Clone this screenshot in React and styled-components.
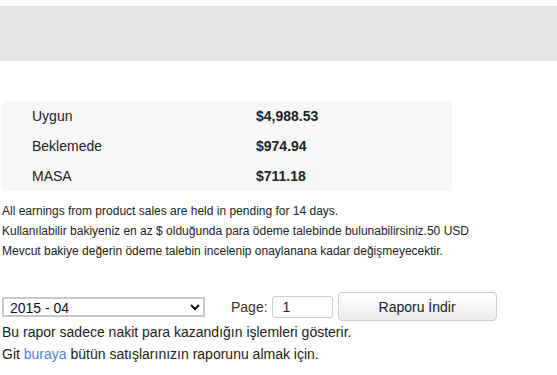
import React, { useState } from 'react'
import styled, { createGlobalStyle } from 'styled-components'

const GlobalStyle = createGlobalStyle`
  body {
    margin: 0;
    background: #fff;
    font-family: 'Liberation Sans', Arial, sans-serif;
    color: #222;
  }
`

const Banner = styled.div`
  margin-top: 6px;
  height: 55px;
  background: #e5e5e5;
`

const Balances = styled.div`
  margin: 40px 0 0 2px;
  width: 450px;
  background: #f7f7f7;
`

const BalanceRow = styled.div`
  display: grid;
  grid-template-columns: 224px 1fr;
  height: 30px;
  align-items: center;
  font-size: 14px;
  padding-left: 30px;
`

const Amount = styled.span`
  font-weight: bold;
`

const Notes = styled.div`
  margin-top: 10px;
  padding-left: 2px;
  font-size: 12px;
  line-height: 20px;
`

const Controls = styled.div`
  display: flex;
  align-items: center;
  margin: 31px 0 0 2px;
  height: 29px;
`

const MonthSelect = styled.select`
  width: 203px;
  height: 20px;
  font-family: inherit;
  font-size: 14px;
  color: #111;
  border: 2px solid #c8c8c8;
  background: #fff;
  padding: 0 2px;
`

const PageLabel = styled.label`
  margin-left: 26px;
  font-size: 14px;
  color: #333;
`

const PageInput = styled.input`
  margin-left: 4px;
  width: 61px;
  height: 22px;
  box-sizing: border-box;
  border: 1px solid #ccc;
  border-radius: 3px;
  padding: 0 10px;
  font-family: inherit;
  font-size: 14px;
  color: #222;
`

const ReportButton = styled.button`
  margin-left: 5px;
  width: 159px;
  height: 29px;
  border: 1px solid #ccc;
  border-radius: 4px;
  background: linear-gradient(#fff, #ececec);
  font-family: inherit;
  font-size: 14px;
  color: #222;
`

const Info = styled.div`
  font-size: 14px;
  line-height: 22px;
  padding-left: 2px;
  color: #222;
`

const Link = styled.a`
  color: #4f86cf;
  text-decoration: none;
`

const balances = [
  ['Uygun', '$4,988.53'],
  ['Beklemede', '$974.94'],
  ['MASA', '$711.18'],
]

export default function App() {
  const [month, setMonth] = useState('2015-04')
  const [page, setPage] = useState('1')
  return (
    <>
      <GlobalStyle />
      <Banner />
      <Balances>
        {balances.map(([label, value]) => (
          <BalanceRow key={label}>
            <span>{label}</span>
            <Amount>{value}</Amount>
          </BalanceRow>
        ))}
      </Balances>
      <Notes>
        All earnings from product sales are held in pending for 14 days.
        <br />
        Kullanılabilir bakiyeniz en az $ olduğunda para ödeme talebinde bulunabilirsiniz.50 USD
        <br />
        Mevcut bakiye değerin ödeme talebin incelenip onaylanana kadar değişmeyecektir.
      </Notes>
      <Controls>
        <MonthSelect value={month} onChange={e => setMonth(e.target.value)}>
          <option value='2015-04'>2015 - 04</option>
          <option value='2015-03'>2015 - 03</option>
        </MonthSelect>
        <PageLabel>Page:</PageLabel>
        <PageInput value={page} onChange={e => setPage(e.target.value)} />
        <ReportButton>Raporu İndir</ReportButton>
      </Controls>
      <Info>
        Bu rapor sadece nakit para kazandığın işlemleri gösterir.
        <br />
        Git <Link href='#'>buraya</Link> bütün satışlarınızın raporunu almak için.
      </Info>
    </>
  )
}
